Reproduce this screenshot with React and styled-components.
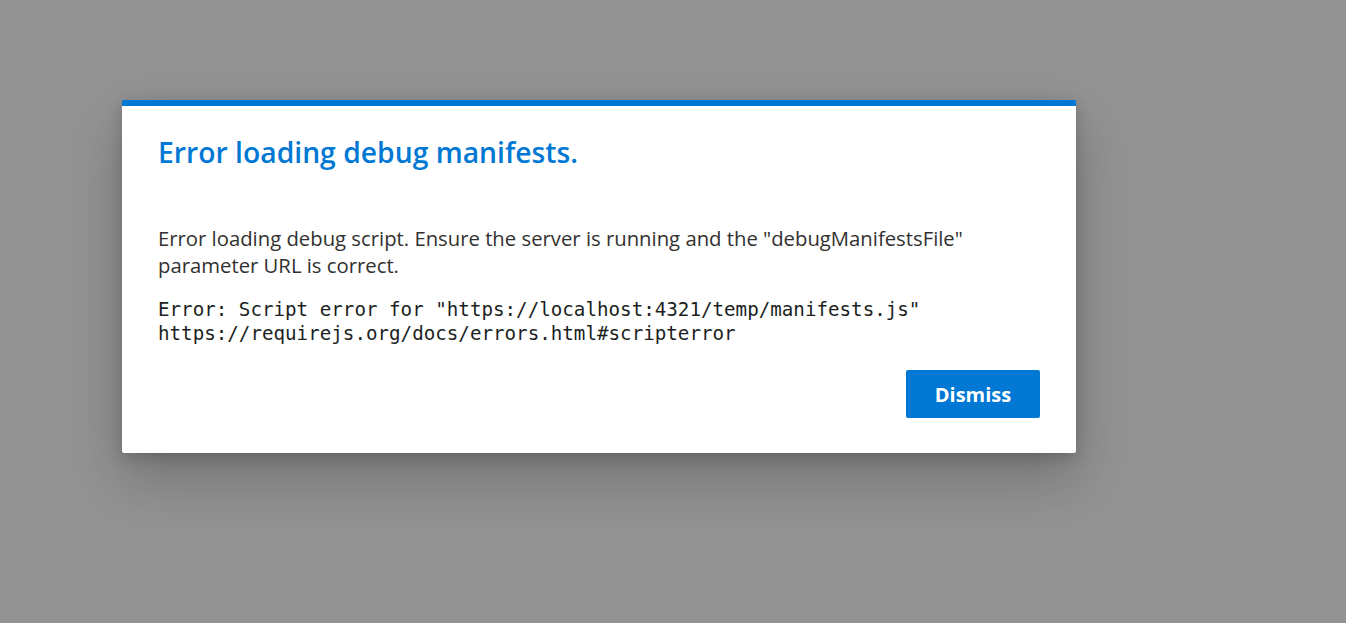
import React from 'react';
import styled, { createGlobalStyle } from 'styled-components';

const GlobalStyle = createGlobalStyle`
  html, body {
    margin: 0;
    padding: 0;
    height: 100%;
  }
  body {
    background: #939393;
    font-family: "Open Sans", "Noto Sans", sans-serif;
  }
  #root {
    height: 100%;
  }
`;

const Backdrop = styled.div`
  min-height: 100%;
  box-sizing: border-box;
  padding: 100px 0 0 122px;
  display: flex;
  align-items: flex-start;
  background: #939393;
`;

const Dialog = styled.div`
  width: 954px;
  box-sizing: border-box;
  background: #ffffff;
  border-top: 6px solid #0078d4;
  border-radius: 2px;
  padding: 26px 36px 35px 36px;
  box-shadow: 0 25.6px 57.6px 0 rgba(0, 0, 0, 0.22), 0 4.8px 14.4px 0 rgba(0, 0, 0, 0.18);
  display: flex;
  flex-direction: column;
`;

const Title = styled.h1`
  margin: 0;
  font-size: 28.3px;
  line-height: 40px;
  font-weight: 600;
  color: #0078d4;
`;

const Message = styled.p`
  margin: 53px 0 0 0;
  font-size: 20.3px;
  line-height: 27px;
  color: #323130;
  max-width: 860px;
`;

const Trace = styled.pre`
  margin: 19px 0 0 0;
  font-family: "DejaVu Sans Mono", "Liberation Mono", monospace;
  font-size: 19.2px;
  line-height: 24px;
  color: #201f1e;
`;

const Actions = styled.div`
  display: flex;
  justify-content: flex-end;
  margin-top: 24px;
`;

const Button = styled.button`
  width: 134px;
  height: 48px;
  border: none;
  border-radius: 2px;
  background: #0078d4;
  color: #ffffff;
  font-family: "Open Sans", "Noto Sans", sans-serif;
  font-size: 20px;
  font-weight: 700;
  cursor: pointer;
`;

export default function App() {
  return (
    <>
      <GlobalStyle />
      <Backdrop>
        <Dialog role="dialog">
          <Title>Error loading debug manifests.</Title>
          <Message>
            Error loading debug script. Ensure the server is running and the "debugManifestsFile" parameter URL is correct.
          </Message>
          <Trace>{'Error: Script error for "https://localhost:4321/temp/manifests.js"\nhttps://requirejs.org/docs/errors.html#scripterror'}</Trace>
          <Actions>
            <Button>Dismiss</Button>
          </Actions>
        </Dialog>
      </Backdrop>
    </>
  );
}
